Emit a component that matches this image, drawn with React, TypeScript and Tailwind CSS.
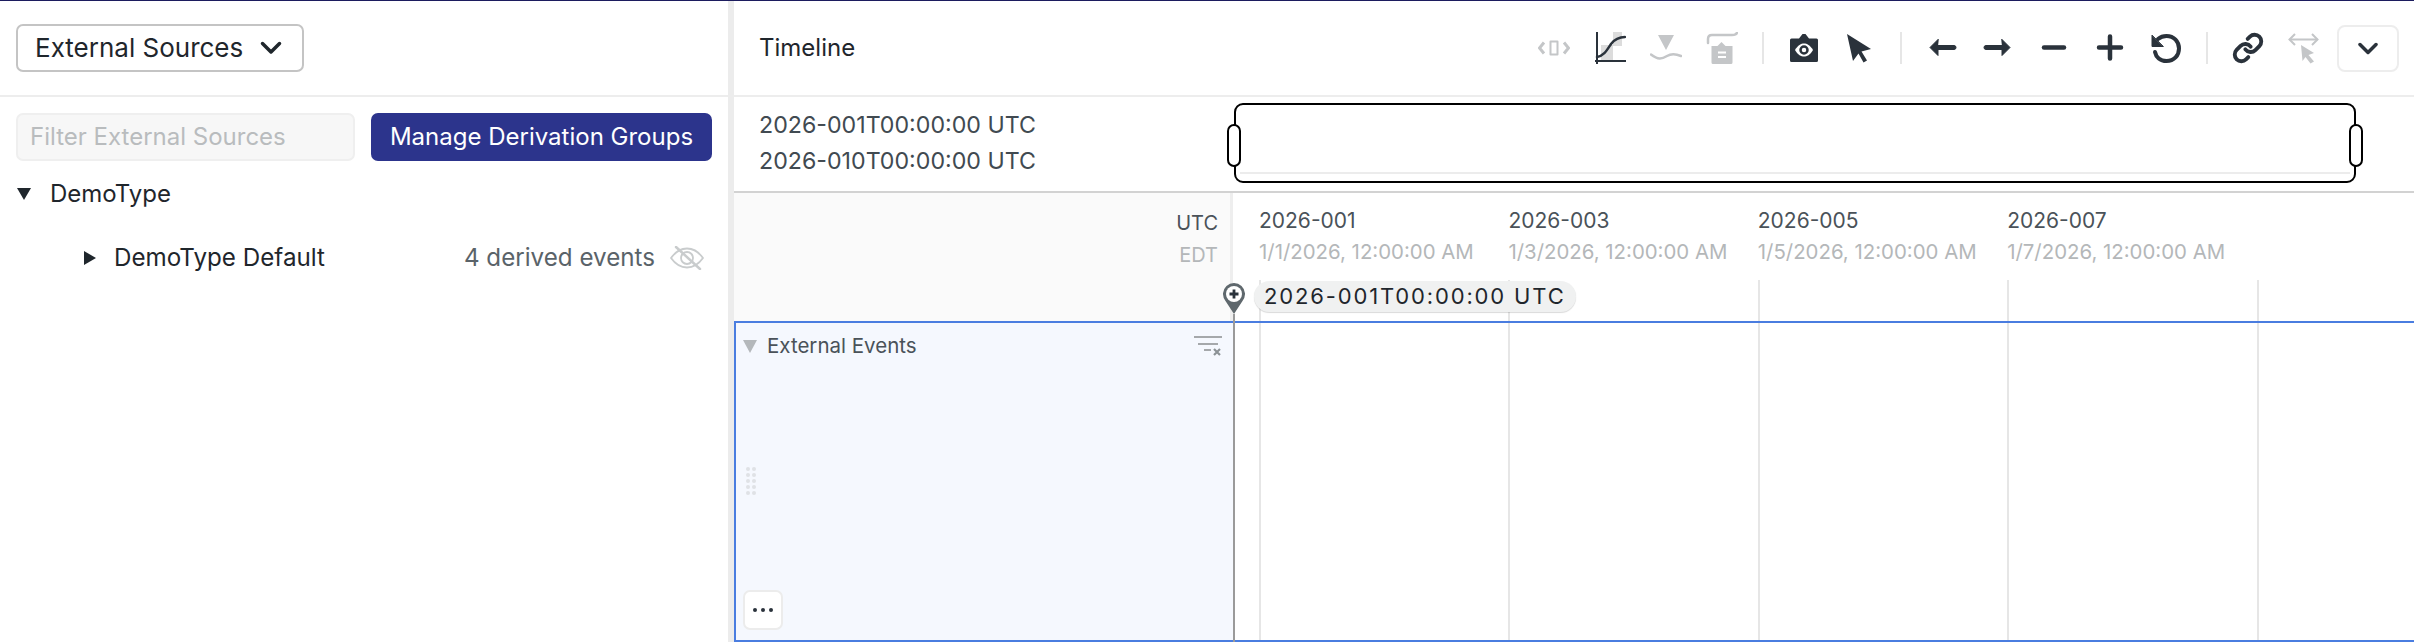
import React from 'react';
import { Link } from 'lucide-react';

const FONT = "font-['Inter',sans-serif]";
const DARK = '#2a323b';
const MUTED = '#c4c6c8';

function Slot({ children }: { children: React.ReactNode }) {
  return <div className="flex h-[32px] w-[56px] items-center justify-center">{children}</div>;
}

function Sep() {
  return <div className="mx-[12px] h-[32px] w-[2px] bg-[#e6e6e6]" />;
}

function Icon({ children, color = DARK }: { children: React.ReactNode; color?: string }) {
  return (
    <svg width="32" height="32" viewBox="0 0 32 32" fill="none" stroke={color} strokeWidth="3" strokeLinecap="round" strokeLinejoin="round">
      {children}
    </svg>
  );
}

function Toolbar() {
  return (
    <div className="flex items-center">
      <Slot>
        <Icon color={MUTED}>
          <path d="M6 10.500 1.500 16 6 21.500M26 10.500 30.500 16 26 21.500" strokeLinecap="butt" strokeLinejoin="miter" />
          <rect x="12.500" y="9.500" width="7" height="13" strokeWidth="2" />
        </Icon>
      </Slot>
      <Slot>
        <Icon>
          <rect x="7" y="13" width="12" height="15" fill="#dcdcdc" stroke="none" />
          <rect x="19" y="0" width="9" height="14" fill="#dcdcdc" stroke="none" />
          <path d="M3 0V32" strokeWidth="2" strokeLinecap="butt" />
          <path d="M1 29H32" strokeWidth="2" strokeLinecap="butt" />
          <path d="M3 25C10 24 13 18 17 12C20 8 25 5 31 5" strokeWidth="2.500" />
        </Icon>
      </Slot>
      <Slot>
        <Icon color={MUTED}>
          <path d="M8 3H24L16 18Z" fill={MUTED} stroke="none" />
          <path d="M1 22.500C8 28 12 27 17 24C22 21 26 22 31 24" strokeWidth="2.500" />
        </Icon>
      </Slot>
      <Slot>
        <Icon color={MUTED}>
          <path d="M2 11V7C2 4 4 3 6 3H26C29 3 31 2 31 0" strokeWidth="2.500" />
          <path d="M7 32a1.500 1.500 0 0 1-1.500-1.500V14H11.500L15.500 10 19.500 14H26.500V30.500A1.500 1.500 0 0 1 25 32Z" fill={MUTED} stroke="none" />
          <path d="M12 20.500H20M12 25H20" stroke="#ffffff" strokeWidth="2" strokeLinecap="butt" />
        </Icon>
      </Slot>
      <Sep />
      <Slot>
        <Icon>
          <path d="M3.500 30a1.500 1.500 0 0 1-1.500-1.500V8a1.500 1.500 0 0 1 1.500-1.500H11L14.500 2H17.500L21 6.500H28.500A1.500 1.500 0 0 1 30 8V28.500A1.500 1.500 0 0 1 28.500 30Z" fill={DARK} stroke="none" />
          <path d="M7 18C10 13 13 11.500 16 11.500C19 11.500 22 13 25 18C22 23 19 24.500 16 24.500C13 24.500 10 23 7 18Z" fill="#ffffff" stroke="none" />
          <circle cx="16" cy="18" r="3.500" fill="#ffffff" stroke={DARK} strokeWidth="2.500" />
        </Icon>
      </Slot>
      <Slot>
        <Icon>
          <path d="M3 2 27 17 17.500 19.500 23 28.500 19.500 30.500 14.500 21.500 9 29Z" fill={DARK} stroke="none" />
        </Icon>
      </Slot>
      <Sep />
      <Slot>
        <Icon>
          <path d="M12 7.500 4 15.500 12 23.500V17.500H28a2 2 0 0 0 0-4H12Z" fill={DARK} stroke={DARK} strokeWidth="1" />
        </Icon>
      </Slot>
      <Slot>
        <Icon>
          <path d="M20 7.500 28 15.500 20 23.500V17.500H4a2 2 0 0 1 0-4H20Z" fill={DARK} stroke={DARK} strokeWidth="1" />
        </Icon>
      </Slot>
      <Slot>
        <Icon>
          <path d="M6 15.500H26" strokeWidth="4.500" />
        </Icon>
      </Slot>
      <Slot>
        <Icon>
          <path d="M5 15.500H27M16 4.500V26.500" strokeWidth="4.500" />
        </Icon>
      </Slot>
      <Slot>
        <Icon>
          <path d="M8 7C11 4.500 14 4 16.500 4C24 4 29 9.500 29 16.500C29 23.500 24 29 16.500 29C10 29 6 25 5 20" strokeWidth="4" />
          <path d="M2 3.500 2 14.500 13 14.500Z" fill={DARK} stroke={DARK} strokeWidth="1" />
        </Icon>
      </Slot>
      <Sep />
      <Slot>
        <Link size={32} strokeWidth={2.900} color={DARK} />
      </Slot>
      <Slot>
        <Icon color={MUTED}>
          <path d="M2 7.500H29" strokeWidth="2" />
          <path d="M7 2 1.500 7.500 7 13M24 2 29.500 7.500 24 13" strokeWidth="2" strokeLinecap="butt" strokeLinejoin="miter" />
          <path d="M13 13 26 21 20.500 23 26 29.500 22.500 31.500 17.500 25 14.500 29Z" fill={MUTED} stroke="none" />
        </Icon>
      </Slot>
      <button className="ml-[5px] flex h-[47px] w-[62px] items-center justify-center rounded-[8px] border-2 border-[#ededed] bg-white">
        <svg width="20" height="13" viewBox="0 0 20 13" fill="none" stroke={DARK} strokeWidth="3.500" strokeLinecap="round" strokeLinejoin="round">
          <path d="M2 2.500 10 10.500 18 2.500" />
        </svg>
      </button>
    </div>
  );
}

function SourcesPanel() {
  return (
    <div className="flex w-[728px] shrink-0 flex-col bg-white">
      <div className="flex h-[96px] items-start border-b-2 border-[#ededed] pl-[16px] pt-[23px]">
        <button className="flex h-[48px] w-[288px] items-center gap-[17px] rounded-[7px] border-2 border-[#c4c4c4] bg-white pl-[17px] text-[26px] leading-none text-[#1f262c]">
          External Sources
          <svg width="22" height="14" viewBox="0 0 22 14" fill="none" stroke="#1f262c" strokeWidth="3.500" strokeLinecap="round" strokeLinejoin="round">
            <path d="M2.500 2.500 11 11 19.500 2.500" />
          </svg>
        </button>
      </div>
      <div className="flex gap-[16px] pl-[16px] pt-[16px]">
        <div className="flex h-[48px] w-[339px] items-center rounded-[7px] border-2 border-[#efefef] bg-[#f7f7f7] pl-[12px] text-[24px] leading-none text-[#b9bcbe]">
          Filter External Sources
        </div>
        <button className="h-[48px] w-[341px] rounded-[7px] bg-[#2c348c] text-center text-[24px] leading-none text-white">
          Manage Derivation Groups
        </button>
      </div>
      <div className="mt-[18px] flex h-[30px] items-center pl-[17px] text-[24px] leading-none text-[#1f262c]">
        <svg width="14" height="12" viewBox="0 0 14 12" fill="#1f262c">
          <path d="M0 0H14L7 12Z" />
        </svg>
        <span className="ml-[19px]">DemoType</span>
      </div>
      <div className="mt-[34px] flex h-[30px] items-center pl-[84px] text-[24px] leading-none text-[#1f262c]">
        <svg width="12" height="14" viewBox="0 0 12 14" fill="#1f262c">
          <path d="M0 0 12 7 0 14Z" />
        </svg>
        <span className="ml-[18px] text-[24.200px]">DemoType Default</span>
        <span className="ml-auto text-[24.200px] text-[#5a6369]">4 derived events</span>
        <svg className="ml-[15px] mr-[24px]" width="34" height="24" viewBox="0 0 34 24" fill="none" stroke="#c9cccd" strokeWidth="1.800" strokeLinecap="round" strokeLinejoin="round">
          <path d="M1 12C6 5 12 2.500 17 2.500C22 2.500 28 5 33 12C28 19 22 21.500 17 21.500C12 21.500 6 19 1 12Z" />
          <circle cx="17" cy="12" r="6" />
          <path d="M6 1 30 23" strokeWidth="2.500" />
        </svg>
      </div>
    </div>
  );
}

const TICKS = [
  ['2026-001', '1/1/2026, 12:00:00 AM'],
  ['2026-003', '1/3/2026, 12:00:00 AM'],
  ['2026-005', '1/5/2026, 12:00:00 AM'],
  ['2026-007', '1/7/2026, 12:00:00 AM'],
  // last tick has no room for a label
  ['', ''],
];

function Timeline() {
  return (
    <div className="relative flex min-w-0 flex-1 flex-col bg-white">
      {/* Toolbar */}
      <div className="flex h-[96px] items-center justify-between border-b-2 border-[#ededed] pl-[25px] pr-[15px]">
        <div className="text-[24px] leading-none text-[#1f262c]">Timeline</div>
        <Toolbar />
      </div>

      {/* Brush row */}
      <div className="flex h-[96px] border-b-2 border-[#d2d2d2]">
        <div className="flex w-[499px] shrink-0 flex-col gap-[13px] pl-[25px] pt-[17px] text-[23.200px] leading-[23px] text-[#414a51]">
          <div>2026-001T00:00:00 UTC</div>
          <div>2026-010T00:00:00 UTC</div>
        </div>
        <div className="relative ml-[1px] mr-[58px] mt-[6px] h-[80px] flex-1 rounded-[9px] border-2 border-black">
          <div className="absolute inset-x-[4px] bottom-[7px] h-[2px] bg-[#ececec]" />
          <div className="absolute left-[-9px] top-[19px] h-[43px] w-[14px] rounded-full border-2 border-black bg-white" />
          <div className="absolute right-[-9px] top-[19px] h-[43px] w-[14px] rounded-full border-2 border-black bg-white" />
        </div>
      </div>

      {/* Axis */}
      <div className="flex h-[128px]">
        <div className="flex w-[499px] shrink-0 flex-col items-end gap-[12px] border-r-[3px] border-[#eeeeee] bg-[#fafafa] pr-[12px] pt-[20px] text-[20px] leading-[20px]">
          <div className="text-[#4a5259]">UTC</div>
          <div className="text-[#b4b7b9]">EDT</div>
        </div>
        <div className="relative flex flex-1 pl-[26px]">
          {TICKS.map(([doy, date], i) => (
            <div key={i} className="flex w-[249.400px] shrink-0 flex-col">
              <div className="h-[87px] pt-[17px] text-[21px] leading-[21px] text-[#4a5259]">
                {doy}
                <div className="mt-[11px] text-[20.400px] leading-[20px] text-[#b4b7b9]">{date}</div>
              </div>
              <div className="flex-1 border-l-2 border-[#e6e6e6]" />
            </div>
          ))}
          <div className="absolute left-[21px] top-[88px] h-[31px] rounded-full bg-[#f0f1f1] px-[10px] text-[22px] leading-[31px] tracking-[1.850px] text-[#1f262c] shadow-[0_1px_1px_rgba(0,0,0,0.15)]">
            2026-001T00:00:00 UTC
          </div>
        </div>
      </div>

      {/* External Events row */}
      <div className="flex flex-1 border-y-2 border-[#4a7de0]">
        <div className="relative w-[499px] shrink-0 border-l-2 border-[#4a7de0] bg-[#f5f8fe]">
          <div className="flex items-center pl-[7px] pt-[12px] text-[20.500px] leading-[22px] text-[#4a5259]">
            <svg width="14" height="13" viewBox="0 0 14 13" fill="#b4b8bb">
              <path d="M0 0H14L7 13Z" />
            </svg>
            <span className="ml-[10px]">External Events</span>
            <svg className="ml-auto mr-[11px]" width="28" height="20" viewBox="0 0 28 20" fill="none" stroke="#a5a8ab" strokeWidth="2">
              <path d="M0 1H28M4 8H24M10 14H17" />
              <path d="M20 13 26 19M26 13 20 19" stroke="#8c9296" strokeWidth="2.200" />
            </svg>
          </div>
          <div className="ml-[10px] mt-[110px] grid w-[10px] grid-cols-2 gap-x-[2px] gap-y-[2px]">
            {Array.from({ length: 10 }).map((_, i) => (
              <div key={i} className="h-[4px] w-[4px] rounded-full bg-[#dfe2e6]" />
            ))}
          </div>
          <button className="absolute bottom-[10px] left-[7px] flex h-[40px] w-[40px] items-center justify-center gap-[4px] rounded-[7px] border-2 border-[#ececec] bg-white">
            <span className="h-[4px] w-[4px] rounded-full bg-[#2a323b]" />
            <span className="h-[4px] w-[4px] rounded-full bg-[#2a323b]" />
            <span className="h-[4px] w-[4px] rounded-full bg-[#2a323b]" />
          </button>
        </div>
        <div className="flex flex-1 pl-[26px]">
          {TICKS.map((_, i) => (
            <div key={i} className="w-[249.400px] shrink-0 border-l-2 border-[#e6e6e6]" />
          ))}
        </div>
      </div>

      {/* Time cursor pin, sits over the axis and the rows */}
      <div className="absolute bottom-0 left-[489px] top-[282px] flex w-[22px] flex-col items-center">
        <svg width="22" height="31" viewBox="0 0 22 31" className="shrink-0">
          <path d="M11 31 2.500 18A11 11 0 1 1 19.500 18Z" fill="#5f686d" />
          <circle cx="11" cy="11" r="8" fill="#ffffff" />
          <path d="M6.500 11H15.500M11 6.500V15.500" stroke="#2a323b" strokeWidth="2.800" />
        </svg>
        <div className="w-[2px] flex-1 bg-[#9a9a9a]" />
      </div>
    </div>
  );
}

export default function App() {
  return (
    <div className={`${FONT} flex h-[642px] w-full overflow-hidden border-t border-[#1c1c5e] bg-white`}>
      <SourcesPanel />
      <div className="w-[6px] shrink-0 bg-[#ececec]" />
      <Timeline />
    </div>
  );
}
